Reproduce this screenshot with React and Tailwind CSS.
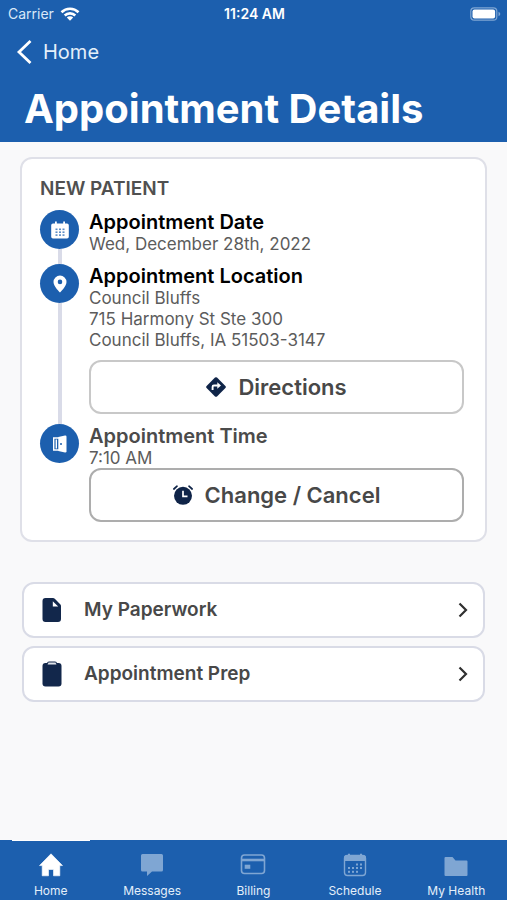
import React, { useState } from 'react';

const CalendarIcon = () => (
  <svg width="18" height="18" viewBox="0 0 18 18" fill="#fff">
    <path d="M2 2.5h2V.6h1.8v1.9h6.4V.6H14v1.9h2A1.8 1.8 0 0 1 17.8 4.3v11.5A1.8 1.8 0 0 1 16 17.6H2A1.8 1.8 0 0 1 .2 15.8V4.3A1.8 1.8 0 0 1 2 2.5z" />
    {[4.5, 8, 11.5].map((x) =>
      [7.5, 10.4, 13.3].map((y) => (
        <rect key={`${x}-${y}`} x={x} y={y} width="2" height="1.6" fill="#5b8cc6" />
      ))
    )}
  </svg>
);

const PinIcon = () => (
  <svg width="14" height="18" viewBox="0 0 14 18" fill="#fff">
    <path fillRule="evenodd" d="M7 .5A6.5 6.5 0 0 0 .5 7c0 4.400 6.500 10.500 6.500 10.500s6.500-6.100 6.500-10.500A6.500 6.500 0 0 0 7 .5zm0 8.700a2.300 2.300 0 1 1 0-4.600 2.300 2.300 0 0 1 0 4.600z" />
  </svg>
);

const DoorIcon = () => (
  <svg width="16" height="18" viewBox="0 0 16 18">
    <path d="M7 3H1.700v12H7" fill="none" stroke="#fff" strokeWidth="1.400" />
    <path d="M4.300 4.500v9" stroke="#fff" strokeWidth="1.400" />
    <path d="M6.300 1.900 13 .5q1.500-.2 1.500 1.200v14.600q0 1.400-1.500 1.200l-6.700-1.400z" fill="#fff" />
    <circle cx="9" cy="9" r="1" fill="#1c5fae" />
  </svg>
);

const DirectionsIcon = () => (
  <svg width="20" height="20" viewBox="0 0 20 20">
    <path d="M9 .6q1-.9 2 0l8.400 8.400q.9 1 0 2L11 19.400q-1 .9-2 0L.6 11q-.9-1 0-2z" fill="#0f2448" />
    <path d="M6.600 13V9.800q0-1.300 1.300-1.300h4" fill="none" stroke="#fff" strokeWidth="1.900" />
    <path d="M11.300 5.200 15 8.500l-3.700 3.300z" fill="#fff" />
  </svg>
);

const AlarmIcon = () => (
  <svg width="20" height="20" viewBox="0 0 20 20">
    <circle cx="10" cy="10.800" r="9" fill="#0f2448" />
    <path d="M.9 4 4 1.200M16 1.200 19.100 4" stroke="#0f2448" strokeWidth="1.700" strokeLinecap="round" />
    <path d="M10 5.800v5.600h4.500" fill="none" stroke="#fff" strokeWidth="1.700" />
  </svg>
);

const PaperIcon = () => (
  <svg width="20" height="26" viewBox="0 0 20 26">
    <path d="M3.500 1H11q1 0 1.800.8l5.400 5.400q.8.800.8 1.800v13a3 3 0 0 1-3 3H3.500a3 3 0 0 1-3-3V4a3 3 0 0 1 3-3z" fill="#12274b" />
    <path d="M10.800 4.200v5.300h5.400z" fill="#fff" />
  </svg>
);

const ClipboardIcon = () => (
  <svg width="20" height="26" viewBox="0 0 20 26">
    <rect x=".5" y="2" width="19" height="23.500" rx="3" fill="#12274b" />
    <rect x="5" y=".5" width="10" height="4" rx="2" fill="#12274b" />
    <path d="M6.500 1.600h7L14.500 3.600h-9z" fill="#dfe3ea" />
  </svg>
);

const HomeIcon = () => (
  <svg width="24" height="24" viewBox="0 0 24 24" fill="currentColor">
    <path d="M12 .8 23.500 12.600h-2.700v10.200h-6.300v-6.300h-5v6.300H3.200V12.600H.5z" stroke="currentColor" strokeLinejoin="round" strokeWidth=".6" />
  </svg>
);

const MessageIcon = () => (
  <svg width="24" height="24" viewBox="0 0 24 24" fill="currentColor">
    <path d="M2.500 1h19A1.500 1.500 0 0 1 23 2.500V17a1.500 1.500 0 0 1-1.500 1.500H12L7 23v-4.500H2.500A1.500 1.500 0 0 1 1 17V2.500A1.500 1.500 0 0 1 2.500 1z" />
  </svg>
);

const BillingIcon = () => (
  <svg width="26" height="24" viewBox="0 0 26 24" fill="none" stroke="currentColor" strokeWidth="1.600">
    <rect x="1.500" y="2" width="23" height="18.500" rx="3" />
    <path d="M1.500 7h23" strokeWidth="2.600" />
    <rect x="5.500" y="12.500" width="4" height="2.500" fill="currentColor" />
  </svg>
);

const ScheduleIcon = () => (
  <svg width="24" height="24" viewBox="0 0 24 24">
    <rect x="1.500" y="2.500" width="21" height="20" rx="3" fill="none" stroke="currentColor" strokeWidth="1.400" />
    <path d="M1 8V5a3 3 0 0 1 3-3h1V.8h2V2h10V.8h2V2h1a3 3 0 0 1 3 3v3z" fill="currentColor" />
    {[
      [13, 10.5], [17, 10.5],
      [5, 14], [9, 14], [13, 14], [17, 14],
      [5, 17.8], [9, 17.8], [13, 17.8]
    ].map(([x, y]) => (
      <rect key={`${x}-${y}`} x={x} y={y} width="2" height="2" fill="currentColor" />
    ))}
  </svg>
);

const FolderIcon = () => (
  <svg width="24" height="24" viewBox="0 0 24 24" fill="currentColor">
    <path d="M1.500 4h7l3 3.500h11a1 1 0 0 1 1 1v13.500a1 1 0 0 1-1 1h-21a1 1 0 0 1-1-1V5a1 1 0 0 1 1-1z" />
  </svg>
);

const tabs = [
  { name: 'Home', icon: <HomeIcon /> },
  { name: 'Messages', icon: <MessageIcon /> },
  { name: 'Billing', icon: <BillingIcon /> },
  { name: 'Schedule', icon: <ScheduleIcon /> },
  { name: 'My Health', icon: <FolderIcon /> }
];

const links = [
  { name: 'My Paperwork', icon: <PaperIcon /> },
  { name: 'Appointment Prep', icon: <ClipboardIcon /> }
];

// One stop on the timeline; the line runs down to the next stop
const Step = ({ icon, last, children }) => (
  <li className="flex gap-2.5">
    <div className="flex flex-col items-center">
      <div className="w-[39px] h-[39px] rounded-full bg-[#1c5fae] flex items-center justify-center shrink-0">
        {icon}
      </div>
      {!last && <div className="w-1 grow bg-[#d9dbe8]" />}
    </div>
    <div className={last ? 'grow' : 'grow pb-2.5'}>{children}</div>
  </li>
);

const ActionButton = ({ icon, border, children }) => (
  <button className={`w-full h-[54px] rounded-xl border-2 bg-white flex items-center justify-center gap-3 text-[22px] leading-7 font-semibold text-[#484848] ${border}`}>
    {icon}
    <span>{children}</span>
  </button>
);

const App = () => {
  const [active, setActive] = useState('Home');

  return (
    <div className="min-h-screen flex flex-col bg-[#f9f9fa] font-['Inter',sans-serif]">
      <header className="bg-[#1c5fae] text-white pb-1.5">
        <div className="grid grid-cols-3 items-center h-7 pl-2 pr-1.5 text-sm leading-5">
          <div className="flex items-center gap-1.5 text-[#d9e8f8]">
            <span>Carrier</span>
            <svg width="20" height="16" viewBox="0 0 20 16" fill="none" stroke="#fff" strokeWidth="2.600">
              <path d="M1.500 6.200a12.200 12.200 0 0 1 17 0M4.700 9.500a7.600 7.600 0 0 1 10.600 0" />
              <path d="M10 14.800 6.800 11.600a4.600 4.600 0 0 1 6.400 0z" fill="#fff" stroke="none" />
            </svg>
          </div>
          <span className="text-center font-semibold">11:24 AM</span>
          <svg className="justify-self-end" width="31" height="14" viewBox="0 0 31 14">
            <rect x=".8" y=".8" width="26" height="12.400" rx="3.500" fill="none" stroke="#7fa6d3" strokeWidth="1.200" />
            <rect x="2.500" y="2.500" width="22.600" height="9" rx="2" fill="#fff" />
            <path d="M28.500 4.800q1.800.8 1.800 2.200t-1.800 2.200z" fill="#7fa6d3" />
          </svg>
        </div>
        <a href="#home" className="flex items-center gap-2.5 h-12 pl-4 text-xl text-[#e4effa]">
          <svg width="17" height="26" viewBox="0 0 17 26" fill="none" stroke="#fff" strokeWidth="2.800">
            <path d="M14.500 2 3 13l11.500 11" />
          </svg>
          Home
        </a>
        <h1 className="pl-6 pt-1.5 text-[40px] leading-[54px] font-bold">Appointment Details</h1>
      </header>

      <main className="grow">
        <section className="mx-5 mt-[15px] px-[18px] py-[18px] bg-white border-2 border-[#dfe0e8] rounded-xl">
          <h2 className="text-[19px] leading-6 font-semibold text-[#505050] mb-[9px]">NEW PATIENT</h2>
          <ul className="pr-[3px]">
            <Step icon={<CalendarIcon />}>
              <h3 className="text-xl leading-6 font-semibold text-black">Appointment Date</h3>
              <p className="text-[17px] leading-5 text-[#5c5c5c]">Wed, December 28th, 2022</p>
            </Step>
            <Step icon={<PinIcon />}>
              <h3 className="text-xl leading-6 font-semibold text-black">Appointment Location</h3>
              <address className="not-italic text-[17px] leading-[21px] text-[#5c5c5c] mb-[9px]">
                Council Bluffs<br />
                715 Harmony St Ste 300<br />
                Council Bluffs, IA 51503-3147
              </address>
              <ActionButton icon={<DirectionsIcon />} border="border-[#c8c8c8]">Directions</ActionButton>
            </Step>
            <Step icon={<DoorIcon />} last>
              <h3 className="text-xl leading-6 font-semibold text-[#4b4b4b]">Appointment Time</h3>
              <p className="text-[17px] leading-5 text-[#5c5c5c]">7:10 AM</p>
              <ActionButton icon={<AlarmIcon />} border="border-[#adadad]">Change / Cancel</ActionButton>
            </Step>
          </ul>
        </section>

        <nav className="mx-[22px] mt-10 mb-6 flex flex-col gap-2">
          {links.map((l) => (
            <a
              key={l.name}
              href="#details"
              className="h-14 pl-[18px] pr-[15px] bg-white border-2 border-[#d9dbe6] rounded-xl flex items-center text-[19px] leading-6 font-semibold text-[#484848]"
            >
              {l.icon}
              <span className="ml-[22px] grow">{l.name}</span>
              <svg width="10" height="16" viewBox="0 0 10 16" fill="none" stroke="#303030" strokeWidth="2.200">
                <path d="M1.500 1.500 8 8l-6.500 6.500" />
              </svg>
            </a>
          ))}
        </nav>
      </main>

      {/* Tab bar */}
      <nav className="grid grid-cols-5 h-[60px] bg-[#1c5fae]">
        {tabs.map((t) => (
          <button
            key={t.name}
            onClick={() => setActive(t.name)}
            className="flex flex-col items-center text-xs leading-4 text-[#e4effa]"
          >
            <span className={active === t.name ? 'w-[78px] h-px bg-white' : 'w-[78px] h-px'} />
            <span className={active === t.name ? 'mt-3 text-white' : 'mt-3 text-[#7fa6d3]'}>{t.icon}</span>
            <span className="mt-1.5">{t.name}</span>
          </button>
        ))}
      </nav>
    </div>
  );
};

export default App;
